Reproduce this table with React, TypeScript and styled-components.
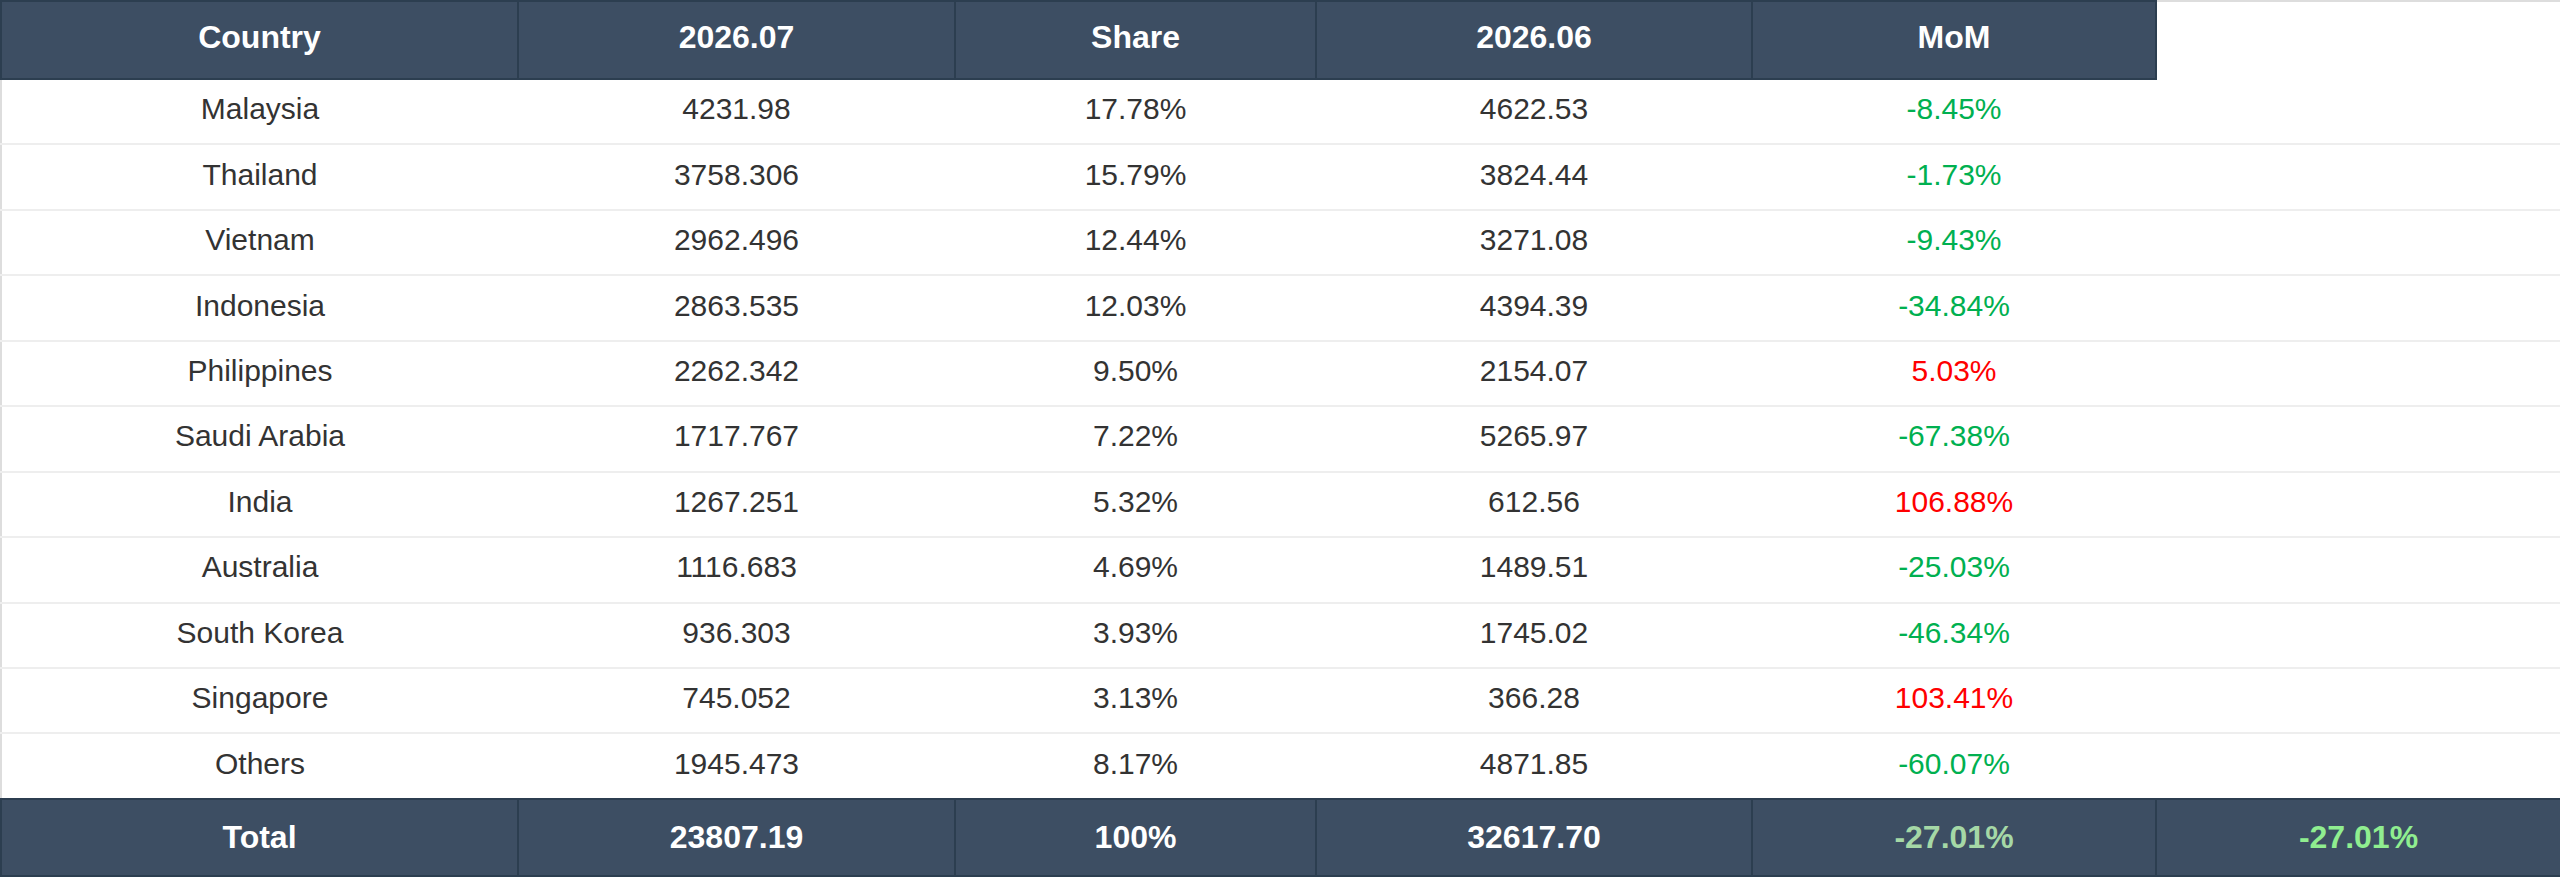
import React from "react";
import styled, { createGlobalStyle } from "styled-components";

const GlobalStyle = createGlobalStyle`
  html, body {
    margin: 0;
    padding: 0;
    background: #ffffff;
  }
  body {
    font-family: "Liberation Sans", Arial, sans-serif;
  }
`;

const Table = styled.table`
  width: 2560px;
  table-layout: fixed;
  border-collapse: collapse;
  border: 2px solid #dddddd;
  font-family: "Liberation Sans", Arial, sans-serif;
`;

const HeadCell = styled.th`
  height: 70px;
  padding: 0 0 6px;
  background: #3d4e63;
  color: #ffffff;
  font-size: 32px;
  font-weight: 700;
  text-align: center;
  vertical-align: middle;
  border: 2px solid #2c3e50;
  line-height: 36px;
`;

const EmptyHeadCell = styled.th`
  padding: 0;
  border: none;
  background: #ffffff;
`;

const BodyRow = styled.tr`
  height: 65.45px;
  &:last-child td {
    border-bottom: none;
  }
`;

const BodyCell = styled.td<{ $tone?: "up" | "down" }>`
  padding: 0 0 5px;
  font-size: 30px;
  line-height: 34px;
  text-align: center;
  vertical-align: middle;
  border-bottom: 2px solid #eeeeee;
  color: ${(p) =>
    p.$tone === "up" ? "#ff0000" : p.$tone === "down" ? "#00b050" : "#333333"};
`;

const FootCell = styled.td<{ $accent?: "muted" | "bright" }>`
  height: 75px;
  padding: 0;
  background: #3d4e63;
  font-size: 32px;
  font-weight: 700;
  line-height: 36px;
  text-align: center;
  vertical-align: middle;
  border: 2px solid #2c3e50;
  color: ${(p) =>
    p.$accent === "muted" ? "#a5d8a6" : p.$accent === "bright" ? "#90ee90" : "#ffffff"};
`;

type Row = { country: string; jul: string; share: string; jun: string; mom: string };

const rows: Row[] = [
  { country: "Malaysia", jul: "4231.98", share: "17.78%", jun: "4622.53", mom: "-8.45%" },
  { country: "Thailand", jul: "3758.306", share: "15.79%", jun: "3824.44", mom: "-1.73%" },
  { country: "Vietnam", jul: "2962.496", share: "12.44%", jun: "3271.08", mom: "-9.43%" },
  { country: "Indonesia", jul: "2863.535", share: "12.03%", jun: "4394.39", mom: "-34.84%" },
  { country: "Philippines", jul: "2262.342", share: "9.50%", jun: "2154.07", mom: "5.03%" },
  { country: "Saudi Arabia", jul: "1717.767", share: "7.22%", jun: "5265.97", mom: "-67.38%" },
  { country: "India", jul: "1267.251", share: "5.32%", jun: "612.56", mom: "106.88%" },
  { country: "Australia", jul: "1116.683", share: "4.69%", jun: "1489.51", mom: "-25.03%" },
  { country: "South Korea", jul: "936.303", share: "3.93%", jun: "1745.02", mom: "-46.34%" },
  { country: "Singapore", jul: "745.052", share: "3.13%", jun: "366.28", mom: "103.41%" },
  { country: "Others", jul: "1945.473", share: "8.17%", jun: "4871.85", mom: "-60.07%" },
];

const widths = [517, 437, 361, 436, 404, 405];

export default function App() {
  return (
    <>
      <GlobalStyle />
      <Table>
        <colgroup>
          {widths.map((w, i) => (
            <col key={i} style={{ width: w }} />
          ))}
        </colgroup>
        <thead>
          <tr>
            <HeadCell>Country</HeadCell>
            <HeadCell>2026.07</HeadCell>
            <HeadCell>Share</HeadCell>
            <HeadCell>2026.06</HeadCell>
            <HeadCell>MoM</HeadCell>
            <EmptyHeadCell />
          </tr>
        </thead>
        <tbody>
          {rows.map((r) => (
            <BodyRow key={r.country}>
              <BodyCell>{r.country}</BodyCell>
              <BodyCell>{r.jul}</BodyCell>
              <BodyCell>{r.share}</BodyCell>
              <BodyCell>{r.jun}</BodyCell>
              <BodyCell $tone={r.mom.startsWith("-") ? "down" : "up"}>{r.mom}</BodyCell>
              <BodyCell />
            </BodyRow>
          ))}
        </tbody>
        <tfoot>
          <tr>
            <FootCell>Total</FootCell>
            <FootCell>23807.19</FootCell>
            <FootCell>100%</FootCell>
            <FootCell>32617.70</FootCell>
            <FootCell $accent="muted">-27.01%</FootCell>
            <FootCell $accent="bright">-27.01%</FootCell>
          </tr>
        </tfoot>
      </Table>
    </>
  );
}
